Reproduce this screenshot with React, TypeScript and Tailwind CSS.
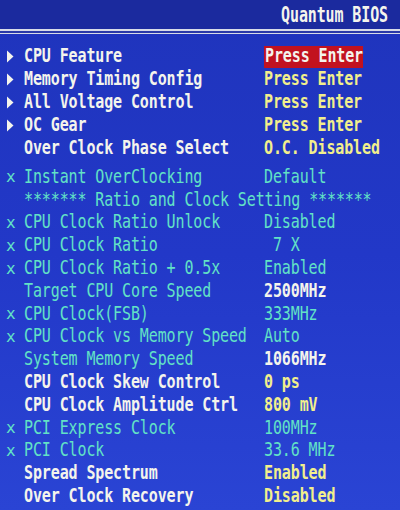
const W = 'text-[#f4f4ec]'
const Y = 'text-[#f2ef8c]'
const C = 'text-[#62e2c6]'

type Row = {
  mark?: 'arrow' | 'x'
  label: string
  labelColor: string
  value: string
  valueColor: string
  bold?: boolean
  valueBold?: boolean
  selected?: boolean
}

const top: Row[] = [
  { mark: 'arrow', label: 'CPU Feature', labelColor: W, value: 'Press Enter', valueColor: W, bold: true, valueBold: true, selected: true },
  { mark: 'arrow', label: 'Memory Timing Config', labelColor: W, value: 'Press Enter', valueColor: Y, bold: true, valueBold: true },
  { mark: 'arrow', label: 'All Voltage Control', labelColor: W, value: 'Press Enter', valueColor: Y, bold: true, valueBold: true },
  { mark: 'arrow', label: 'OC Gear', labelColor: W, value: 'Press Enter', valueColor: Y, bold: true, valueBold: true },
  { label: 'Over Clock Phase Select', labelColor: W, value: 'O.C. Disabled', valueColor: Y, bold: true, valueBold: true },
]

const bottom: Row[] = [
  { mark: 'x', label: 'Instant OverClocking', labelColor: C, value: 'Default', valueColor: C },
  { label: '******* Ratio and Clock Setting *******', labelColor: C, value: '', valueColor: C },
  { mark: 'x', label: 'CPU Clock Ratio Unlock', labelColor: C, value: 'Disabled', valueColor: C },
  { mark: 'x', label: 'CPU Clock Ratio', labelColor: C, value: '\u00a07 X', valueColor: C },
  { mark: 'x', label: 'CPU Clock Ratio + 0.5x', labelColor: C, value: 'Enabled', valueColor: C },
  { label: 'Target CPU Core Speed', labelColor: C, value: '2500MHz', valueColor: W, valueBold: true },
  { mark: 'x', label: 'CPU Clock(FSB)', labelColor: C, value: '333MHz', valueColor: C },
  { mark: 'x', label: 'CPU Clock vs Memory Speed', labelColor: C, value: 'Auto', valueColor: C },
  { label: 'System Memory Speed', labelColor: C, value: '1066MHz', valueColor: W, valueBold: true },
  { label: 'CPU Clock Skew Control', labelColor: W, value: '0 ps', valueColor: Y, bold: true, valueBold: true },
  { label: 'CPU Clock Amplitude Ctrl', labelColor: W, value: '800 mV', valueColor: Y, bold: true, valueBold: true },
  { mark: 'x', label: 'PCI Express Clock', labelColor: C, value: '100MHz', valueColor: C },
  { mark: 'x', label: 'PCI Clock', labelColor: C, value: '33.6 MHz', valueColor: C },
  { label: 'Spread Spectrum', labelColor: W, value: 'Enabled', valueColor: Y, bold: true, valueBold: true },
  { label: 'Over Clock Recovery', labelColor: W, value: 'Disabled', valueColor: Y, bold: true, valueBold: true },
]

function Arrow() {
  return (
    <svg width="8" height="13" viewBox="0 0 8 13" className="block">
      <path d="M1 0.5 L7.5 6.5 L1 12.5 Z" fill="#f4f4ec" />
    </svg>
  )
}

function BiosRow({ row, h }: { row: Row; h: string }) {
  return (
    <div className={`flex items-center ${h}`}>
      <div className="w-[24px] pl-[6px] flex items-center">
        {row.mark === 'arrow' && <Arrow />}
        {row.mark === 'x' && <span className={`${C} leading-none text-[16px]`}>x</span>}
      </div>
      <div className={`w-[240px] whitespace-pre ${row.labelColor} ${row.bold ? 'font-bold' : ''}`}>
        <span className="inline-block scale-y-[1.28]">{row.label}</span>
      </div>
      <div
        className={`whitespace-pre ${row.valueColor} ${row.valueBold ? 'font-bold' : ''} ${
          row.selected ? 'bg-[#c2121f] w-[99px] h-[22px] flex items-center pl-[1px]' : ''
        }`}
      >
        <span className="inline-block scale-y-[1.28]">{row.value}</span>
      </div>
    </div>
  )
}

export default function App() {
  return (
    <div
      className="w-[400px] h-[510px] overflow-hidden bg-gradient-to-b from-[#1f34bc] via-[#2238c8] to-[#2a44d4] text-[15px] tracking-[-0.12px] leading-none"
      style={{ fontFamily: '"DejaVu Sans Mono", "Liberation Mono", monospace' }}
    >
      {/* header */}
      <div className="h-[29px] bg-[#1b2a9e] flex items-center justify-end pr-[12px]">
        <span className="inline-block scale-y-[1.45] font-bold text-[#f4f4ec] translate-y-[1px]">Quantum BIOS</span>
      </div>
      <div className="h-[2px] bg-[#d8dce8]" />
      <div className="h-[2px] bg-[#2a3aa8]" />
      <div className="h-[1px] bg-[#d8dce8]" />

      <div className="pt-[11px]">
        {top.map((r) => (
          <BiosRow key={r.label} row={r} h="h-[23px]" />
        ))}
      </div>
      <div className="pt-[6px]">
        {bottom.map((r) => (
          <BiosRow key={r.label} row={r} h="h-[22.8px]" />
        ))}
      </div>
    </div>
  )
}
